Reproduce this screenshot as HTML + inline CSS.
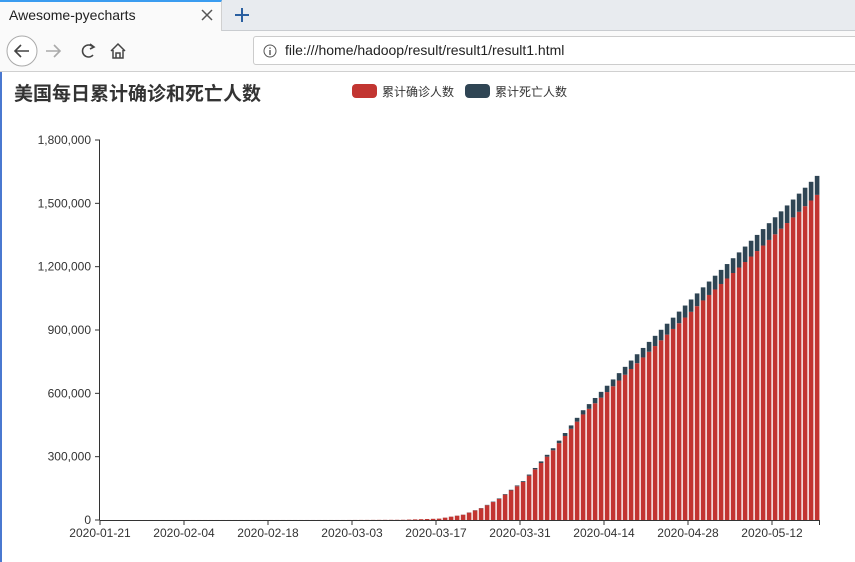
<!DOCTYPE html>
<html><head><meta charset="utf-8"><style>
body{margin:0;width:855px;height:562px;overflow:hidden;background:#fff;font-family:"Liberation Sans","Noto Sans CJK SC",sans-serif;position:relative}
.tabbar{position:absolute;left:0;top:0;width:855px;height:30px;background:#e8ebef;border-bottom:1px solid #c9ccd0}
.tab{position:absolute;left:0;top:0;width:222px;height:31px;background:#fafafa;border-top:2px solid #3a9cf0;border-right:1px solid #d0d0d0;box-sizing:border-box}
.tab span{position:absolute;left:9px;top:5px;font-size:14px;color:#222}
.nav{position:absolute;left:0;top:31px;width:855px;height:40px;background:#fafafa;border-bottom:1px solid #d0d0d0}
.url{position:absolute;left:253px;top:5px;width:610px;height:29px;border:1px solid #ccc;border-radius:3px;background:#fff;box-sizing:border-box}
.url span{position:absolute;left:31px;top:5px;font-size:14px;color:#222}
</style></head><body>
<div class="tabbar"><div class="tab"><span>Awesome-pyecharts</span></div>
<svg style="position:absolute;left:200px;top:8px" width="14" height="14"><path d="M2 2L12 12M12 2L2 12" stroke="#555" stroke-width="1.5"/></svg>
<svg style="position:absolute;left:233px;top:6px" width="18" height="18"><path d="M9 2V16M2 9H16" stroke="#2a5fa0" stroke-width="2"/></svg>
</div>
<div class="nav">
<svg style="position:absolute;left:2px;top:3px" width="140" height="34">
<circle cx="20" cy="17" r="15" fill="#fff" stroke="#aaa"/>
<path d="M27 17H13M19 11L13 17L19 23" stroke="#444" stroke-width="1.6" fill="none"/>
<path d="M58 17H44M52 11L58 17L52 23" stroke="#aaa" stroke-width="1.6" fill="none"/>
<path d="M91 13A6 6 0 1 0 91 21" stroke="#444" stroke-width="1.6" fill="none"/><path d="M88 10L92 13L88 15" stroke="#444" stroke-width="1.6" fill="none"/>
<path d="M109 17L116 10L123 17M111 16V24H121V16M114 24V19H118V24" stroke="#444" stroke-width="1.5" fill="none"/>
</svg>
<div class="url"><svg style="position:absolute;left:9px;top:7px" width="14" height="14"><circle cx="7" cy="7" r="6" fill="none" stroke="#555"/><path d="M7 6V11M7 3.5V4.8" stroke="#555" stroke-width="1.4"/></svg><span>file:///home/hadoop/result/result1/result1.html</span></div>
</div>
<div style="position:absolute;left:0;top:72px;width:2px;height:490px;background:#4a78d0"></div>
<div style="position:absolute;left:14px;top:79px;font-size:19px;font-weight:bold;color:#333">美国每日累计确诊和死亡人数</div>
<div style="position:absolute;left:352px;top:84px;width:25px;height:14px;border-radius:4px;background:#c23531"></div>
<div style="position:absolute;left:382px;top:83px;font-size:12px;color:#333">累计确诊人数</div>
<div style="position:absolute;left:465px;top:84px;width:25px;height:14px;border-radius:4px;background:#2f4554"></div>
<div style="position:absolute;left:495px;top:83px;font-size:12px;color:#333">累计死亡人数</div>
<svg id="c" style="position:absolute;left:0;top:0" width="855" height="562"></svg>
<script>
var s='';
var yl=['0','300,000','600,000','900,000','1,200,000','1,500,000','1,800,000'];
function Y(v){return 520-v/1800000*380;}
for(var k=0;k<7;k++){var y=Y(k*300000);s+='<line x1="95" x2="100" y1="'+y+'" y2="'+y+'" stroke="#333"/><text x="91" y="'+(y+4)+'" text-anchor="end" font-size="12" fill="#333">'+yl[k]+'</text>';}
var kc=[[0,0],[40,0.1],[50,1],[56,6.5],[60,25],[63,55],[66,100],[70,180],[75,330],[80,500],[84,606],[90,770],[100,1040],[110,1300],[119,1540]];
var kd=[[0,0],[55,0.1],[60,0.5],[65,2],[70,4],[75,10],[80,20],[84,30],[90,45],[100,62],[110,78],[119,90]];
function itp(a,i){for(var j=1;j<a.length;j++){if(i<=a[j][0]){var t=(i-a[j-1][0])/(a[j][0]-a[j-1][0]);return (a[j-1][1]+t*(a[j][1]-a[j-1][1]))*1000;}}return a[a.length-1][1]*1000;}
for(var i=0;i<120;i++){var c=itp(kc,i),d=itp(kd,i),x=100+6*i+0.8;
var yc=Y(c),yt=Y(c+d);
s+='<rect x="'+x+'" y="'+yc+'" width="4.6" height="'+(520-yc)+'" fill="#c23531"/>';
s+='<rect x="'+x+'" y="'+yt+'" width="4.6" height="'+(yc-yt)+'" fill="#2f4554"/>';}
s+='<line x1="99.5" x2="99.5" y1="140" y2="520" stroke="#333"/><line x1="100" x2="819.5" y1="520.5" y2="520.5" stroke="#333"/>';
var dl=['2020-01-21','2020-02-04','2020-02-18','2020-03-03','2020-03-17','2020-03-31','2020-04-14','2020-04-28','2020-05-12'];
for(var k=0;k<9;k++){var x=100+84*k;s+='<line x1="'+x+'" x2="'+x+'" y1="520" y2="525" stroke="#333"/><text x="'+x+'" y="537" text-anchor="middle" font-size="12" fill="#333">'+dl[k]+'</text>';}
s+='<line x1="819.5" x2="819.5" y1="520" y2="525" stroke="#333"/>';
document.getElementById('c').innerHTML=s;
</script>
</body></html>
